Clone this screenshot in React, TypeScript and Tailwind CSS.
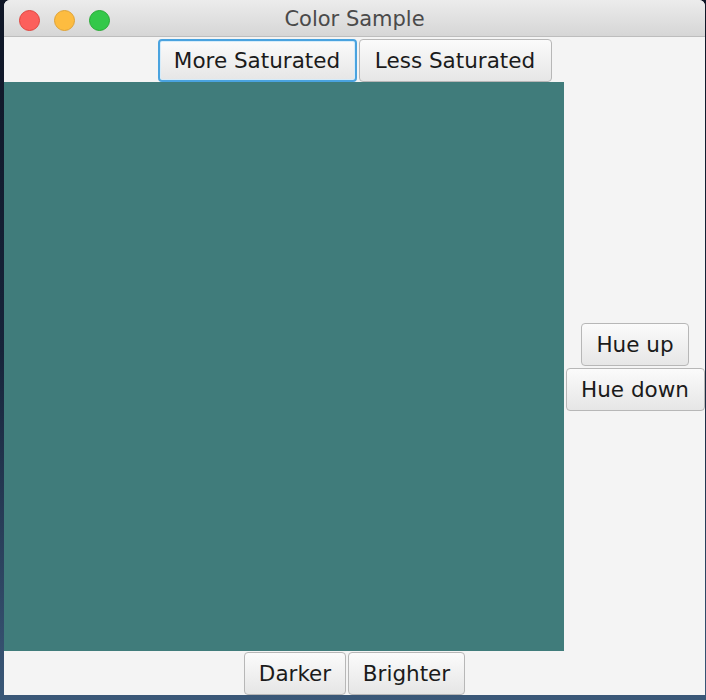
import React from "react";

const font = { fontFamily: '"DejaVu Sans", "Liberation Sans", sans-serif' };

function Btn({ label, focused, className = "" }: { label: string; focused?: boolean; className?: string }) {
  return (
    <button
      className={`h-[43px] rounded-[4px] bg-gradient-to-b from-[#fbfbfb] to-[#e6e6e6] text-[21.5px] text-[#1b1b1b] leading-none pt-[1px] ${
        focused ? "border-[2px] border-[#4aa3df] shadow-[inset_0_0_0_1px_#d6ecfa]" : "border border-[#b7b7b7]"
      } ${className}`}
    >
      {label}
    </button>
  );
}

export default function App() {
  return (
    <div className="w-[706px] h-[700px] bg-gradient-to-b from-[#0f1626] via-[#17243a] to-[#3a5878] pl-[4px] pr-[1px] pb-[5px] overflow-hidden" style={font}>
      <div className="h-full flex flex-col bg-[#f4f4f4] rounded-t-[6px] overflow-hidden">
        {/* title bar */}
        <div className="relative h-[37px] shrink-0 bg-gradient-to-b from-[#ececec] to-[#d6d6d6] border-b border-[#bdbdbd] flex items-center justify-center pt-[3px]">
          <div className="absolute left-[15px] top-[10px] flex gap-[14px]">
            <span className="w-[21px] h-[21px] rounded-full bg-[#fc605c] border border-[#e0443e]" />
            <span className="w-[21px] h-[21px] rounded-full bg-[#fdbc40] border border-[#dea236]" />
            <span className="w-[21px] h-[21px] rounded-full bg-[#34c84a] border border-[#27aa35]" />
          </div>
          <span className="text-[21px] text-[#4a4a4a]">Color Sample</span>
        </div>

        {/* top */}
        <div className="h-[45px] shrink-0 flex items-center justify-center gap-[2px] pt-[1px]">
          <Btn label="More Saturated" focused className="w-[199px]" />
          <Btn label="Less Saturated" className="w-[193px]" />
        </div>

        {/* center + right */}
        <div className="h-[569px] shrink-0 flex">
          <div className="w-[560px] h-full bg-[#407c7b]" />
          <div className="flex-1 flex flex-col items-center justify-center gap-[2px] pl-[1px]">
            <Btn label="Hue up" className="w-[108px]" />
            <Btn label="Hue down" className="w-[139px]" />
          </div>
        </div>

        {/* bottom */}
        <div className="flex-1 flex items-start justify-center gap-[2px] pt-[1px]">
          <Btn label="Darker" className="w-[102px]" />
          <Btn label="Brighter" className="w-[117px]" />
        </div>
      </div>
    </div>
  );
}
